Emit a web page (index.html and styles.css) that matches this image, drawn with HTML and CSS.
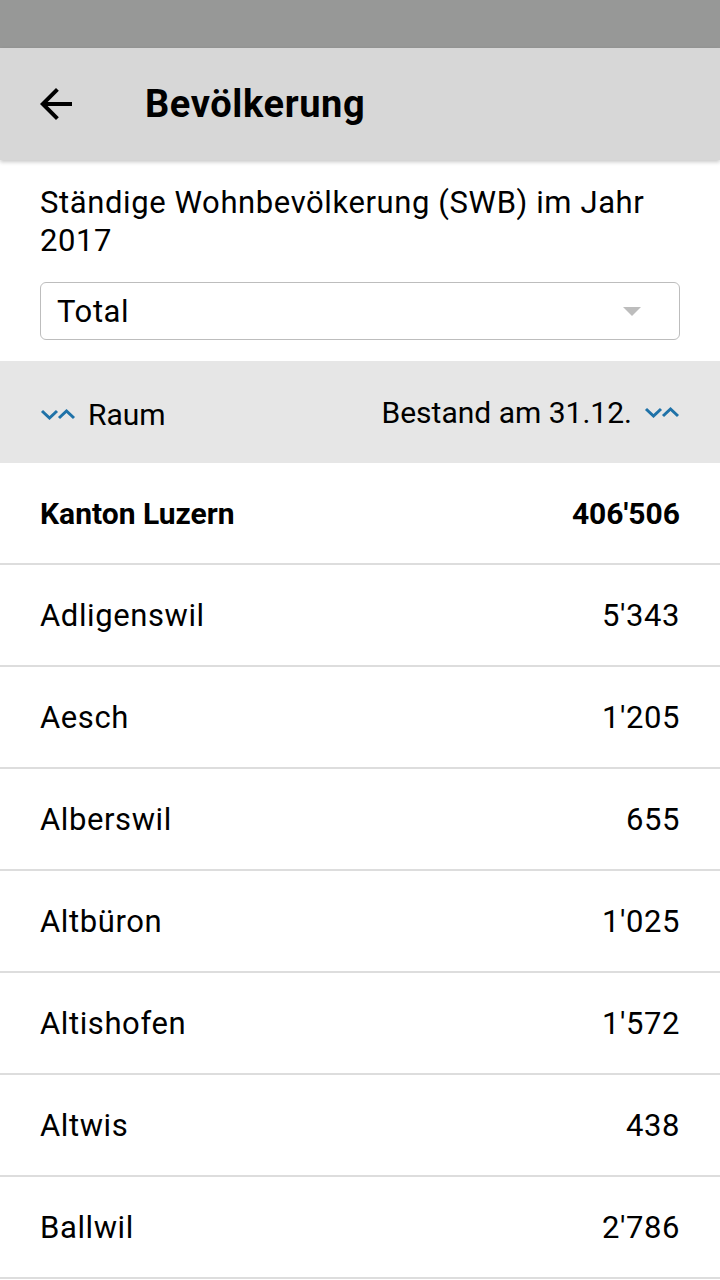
FILE: index.html
```html
<!DOCTYPE html>
<html lang="de">
<head>
    <meta charset="UTF-8">
    <meta name="viewport" content="width=device-width, initial-scale=1.0">
    <title>Bevölkerung</title>
    <link rel="stylesheet" href="styles.css">
</head>
<body>
    <div class="status-bar"></div>
    <div class="app-bar">
        <button class="back" aria-label="Zurück">
            <svg width="48" height="48" viewBox="0 0 24 24">
                <path d="M20 11H7.83l5.59-5.59L12 4l-8 8 8 8 1.41-1.41L7.83 13H20v-2z" fill="#000"/>
            </svg>
        </button>
        <h1>Bevölkerung</h1>
    </div>

    <div class="intro">
        <p>Ständige Wohnbevölkerung (SWB) im Jahr 2017</p>
        <div class="select">
            <span>Total</span>
            <span class="caret"></span>
        </div>
    </div>

    <table>
        <thead>
            <tr>
                <th>
                    <span class="sort">
                        <svg width="36" height="12" viewBox="0 0 36 12"><path d="M2 3l7.5 7 7.5-7M19 10l7.5-7 7.5 7" fill="none" stroke="#1f72a8" stroke-width="3"/></svg>
                        Raum
                    </span>
                </th>
                <th class="num">
                    <span class="sort">
                        Bestand am 31.12.
                        <svg width="36" height="12" viewBox="0 0 36 12"><path d="M2 3l7.5 7 7.5-7M19 10l7.5-7 7.5 7" fill="none" stroke="#1f72a8" stroke-width="3"/></svg>
                    </span>
                </th>
            </tr>
        </thead>
        <tbody>
            <tr class="total"><td>Kanton Luzern</td><td class="num">406'506</td></tr>
            <tr><td>Adligenswil</td><td class="num">5'343</td></tr>
            <tr><td>Aesch</td><td class="num">1'205</td></tr>
            <tr><td>Alberswil</td><td class="num">655</td></tr>
            <tr><td>Altbüron</td><td class="num">1'025</td></tr>
            <tr><td>Altishofen</td><td class="num">1'572</td></tr>
            <tr><td>Altwis</td><td class="num">438</td></tr>
            <tr><td>Ballwil</td><td class="num">2'786</td></tr>
        </tbody>
    </table>
</body>
</html>
```

FILE: styles.css
```css
body {
    margin: 0;
    font-family: Roboto, "Liberation Sans", sans-serif;
    color: #000;
    background-color: #fff;
    height: 1280px;
    overflow: hidden;
}
.status-bar {
    height: 48px;
    background-color: #979897;
}
.app-bar {
    position: relative;
    z-index: 1;
    display: flex;
    align-items: center;
    height: 112px;
    background-color: #d7d7d7;
    box-shadow: 0 2px 4px rgba(0, 0, 0, 0.22);
}
.back {
    border: none;
    background: none;
    padding: 0;
    margin-left: 32px;
    width: 48px;
    height: 48px;
    display: flex;
}
.app-bar h1 {
    margin: 0 0 0 65px;
    font-size: 38px;
    font-weight: 700;
    letter-spacing: 0.6px;
}
.intro {
    padding: 24px 40px 21px;
}
.intro p {
    margin: 0;
    font-size: 31px;
    line-height: 38px;
    letter-spacing: 0.6px;
}
.select {
    margin-top: 22px;
    height: 56px;
    border: 1px solid #bdbdbd;
    border-radius: 6px;
    display: flex;
    align-items: center;
    justify-content: space-between;
    padding: 0 38px 0 16px;
    font-size: 31px;
    letter-spacing: 0.6px;
}
.caret {
    width: 0;
    height: 0;
    border-left: 9px solid transparent;
    border-right: 9px solid transparent;
    border-top: 9px solid #bdbdbd;
}
table {
    width: 100%;
    border-collapse: collapse;
}
th, td {
    height: 100px;
    padding: 0 40px;
    font-size: 31px;
    letter-spacing: 0.6px;
    text-align: left;
    border-bottom: 2px solid #dddddd;
}
th {
    font-size: 30px;
    font-weight: 400;
    letter-spacing: 0;
    background-color: #e6e6e6;
    border-bottom: none;
    height: 102px;
}
td.num, th.num {
    text-align: right;
}
th:first-child, td:first-child {
    padding-right: 0;
}
th:last-child, td:last-child {
    padding-left: 0;
}
.sort {
    display: inline-flex;
    align-items: center;
    gap: 12px;
}
.total td {
    font-size: 30px;
    font-weight: 700;
    letter-spacing: 0;
}
```
